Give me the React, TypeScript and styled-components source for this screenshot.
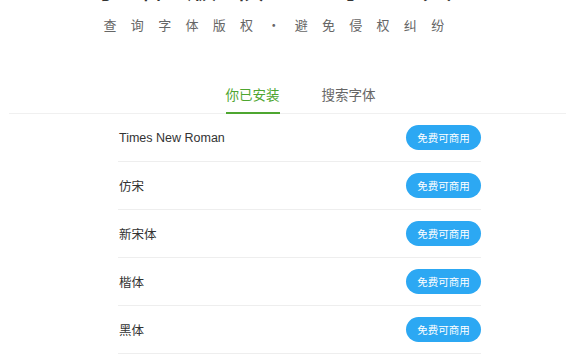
import React, { useState } from 'react';
import styled, { createGlobalStyle, css } from 'styled-components';

const GlobalStyle = createGlobalStyle`
    html, body {
        margin:0;
        padding:0;
        background:#fff;
        overflow:hidden;
    }
    body {
        font-family:"Liberation Sans", "Noto Sans CJK SC", sans-serif;
        color:#333;
    }
`;

const Page = styled.div`
    width:576px;
    height:356px;
    overflow:hidden;
    display:flex;
    flex-direction:column;
`;

const Header = styled.header`
    display:flex;
    flex-direction:column;
    align-items:center;
    padding-right:14px;
`;

const Title = styled.h1`
    margin:-36px 0 0 0;
    font-family:"Noto Sans CJK SC", sans-serif;
    font-size:30px;
    line-height:42px;
    font-weight:400;
    letter-spacing:17px;
    color:#333;
`;

const Slogan = styled.p`
    margin:10px 0 0 0;
    font-family:"Noto Sans CJK SC", sans-serif;
    font-size:13px;
    line-height:18px;
    letter-spacing:14.3px;
    color:#666;
`;

const TabBar = styled.nav`
    margin:49px 10px 0 9px;
    display:flex;
    justify-content:center;
    gap:42px;
    padding-left:26px;
    border-bottom:1px solid #f0f0f0;
`;

const Tab = styled.button<{ active?: boolean }>`
    border:0;
    background:transparent;
    padding:0 0 7px 0;
    margin-bottom:-1px;
    font-family:"Noto Sans CJK SC", sans-serif;
    font-size:13.5px;
    line-height:22px;
    cursor:pointer;
    border-bottom:2px solid transparent;
    ${(props) => props.active
        ? css`
            color:#4ea630;
            border-bottom-color:#4ea630;
        `
        : css`
            color:#666;
        `};
`;

const List = styled.ul`
    list-style:none;
    margin:0 0 0 118px;
    padding:0;
    width:363px;
`;

const Row = styled.li`
    display:flex;
    align-items:center;
    justify-content:space-between;
    height:47px;
    border-bottom:1px solid #eeeeee;
`;

const FontName = styled.span`
    font-size:12.5px;
    color:#333;
    padding-left:1px;
`;

const LicenseButton = styled.button`
    width:75px;
    height:25px;
    border:0;
    border-radius:13px;
    background:#2ca8f3;
    color:#fff;
    font-family:"Noto Sans CJK SC", sans-serif;
    font-size:10.5px;
    line-height:25px;
    padding:0;
    cursor:pointer;
`;

const fonts = ['Times New Roman', '仿宋', '新宋体', '楷体', '黑体'];

const App = () => {
    const [tab, setTab] = useState(0);
    return (
        <Page>
            <GlobalStyle />
            <Header>
                <Title>字体版权查询工具</Title>
                <Slogan>查询字体版权·避免侵权纠纷</Slogan>
            </Header>
            <TabBar>
                <Tab active={tab === 0} onClick={() => setTab(0)}>你已安装</Tab>
                <Tab active={tab === 1} onClick={() => setTab(1)}>搜索字体</Tab>
            </TabBar>
            <List>
                {fonts.map((name) => (
                    <Row key={name}>
                        <FontName>{name}</FontName>
                        <LicenseButton>免费可商用</LicenseButton>
                    </Row>
                ))}
            </List>
        </Page>
    );
};

export default App;
